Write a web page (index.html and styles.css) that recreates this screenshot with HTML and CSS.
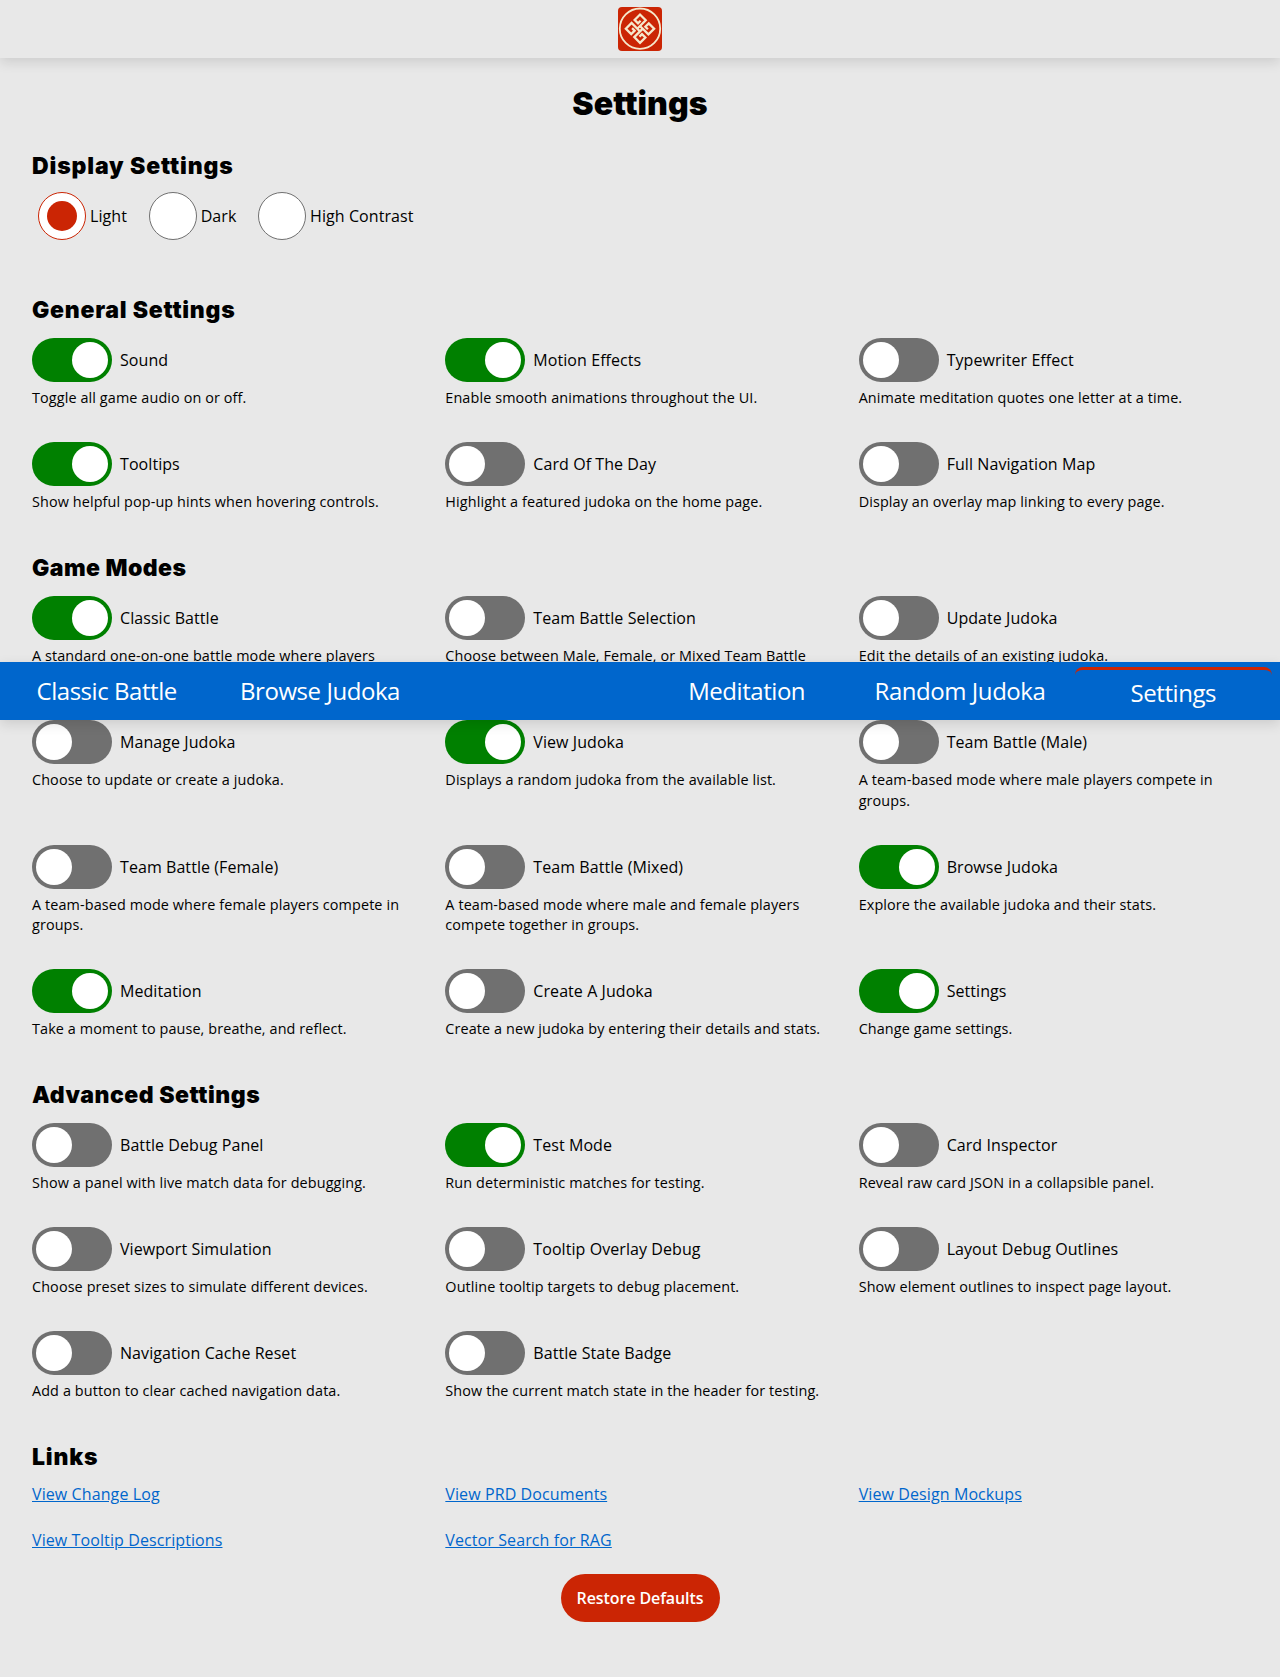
FILE: index.html
```html
<!DOCTYPE html>
<html lang="en">
<head>
<meta charset="utf-8">
<title>Settings</title>
<link rel="stylesheet" href="styles.css">
</head>
<body>
<header class="header">
  <svg class="logo" viewBox="0 0 44 44" aria-hidden="true">
    <rect width="44" height="44" rx="4" fill="#cb2504"/>
    <g fill="none" stroke="#f5e8cc">
      <circle cx="22" cy="21.7" r="20.2" stroke-width="1.8"/>
      <g transform="translate(22 21.7) rotate(45)" stroke-width="2.3">
        <path d="M-2 -1.9H10V-10H2.4V-5.2H6"/>
        <path d="M1.9 -2V10H10V2.4H5.2V6"/>
        <path d="M2 1.9H-10V10H-2.4V5.2H-6"/>
        <path d="M-1.9 2V-10H-10V-2.4H-5.2V-6"/>
      </g>
    </g>
  </svg>
</header>
<main class="page">
  <h1 class="title">Settings</h1>

  <section class="section">
    <h2 class="heading display">Display Settings</h2>
    <div class="modes">
      <label class="mode"><span class="radio checked"></span>Light</label>
      <label class="mode"><span class="radio"></span>Dark</label>
      <label class="mode"><span class="radio"></span>High Contrast</label>
    </div>
  </section>

  <section class="section">
    <h2 class="heading general">General Settings</h2>
    <div class="grid">
      <div class="item"><div class="row"><span class="switch on"></span>Sound</div><p class="desc">Toggle all game audio on or off.</p></div>
      <div class="item"><div class="row"><span class="switch on"></span>Motion Effects</div><p class="desc">Enable smooth animations throughout the UI.</p></div>
      <div class="item"><div class="row"><span class="switch"></span>Typewriter Effect</div><p class="desc">Animate meditation quotes one letter at a time.</p></div>
      <div class="item"><div class="row"><span class="switch on"></span>Tooltips</div><p class="desc">Show helpful pop-up hints when hovering controls.</p></div>
      <div class="item"><div class="row"><span class="switch"></span>Card Of The Day</div><p class="desc">Highlight a featured judoka on the home page.</p></div>
      <div class="item"><div class="row"><span class="switch"></span>Full Navigation Map</div><p class="desc">Display an overlay map linking to every page.</p></div>
    </div>
  </section>

  <section class="section">
    <h2 class="heading game-modes">Game Modes</h2>
    <div class="grid">
      <div class="item"><div class="row"><span class="switch on"></span>Classic Battle</div><p class="desc two-line">A standard one-on-one battle mode where players</p></div>
      <div class="item"><div class="row"><span class="switch"></span>Team Battle Selection</div><p class="desc two-line">Choose between Male, Female, or Mixed Team Battle</p></div>
      <div class="item"><div class="row"><span class="switch"></span>Update Judoka</div><p class="desc">Edit the details of an existing judoka.</p></div>
      <div class="item"><div class="row"><span class="switch"></span>Manage Judoka</div><p class="desc">Choose to update or create a judoka.</p></div>
      <div class="item"><div class="row"><span class="switch on"></span>View Judoka</div><p class="desc">Displays a random judoka from the available list.</p></div>
      <div class="item"><div class="row"><span class="switch"></span>Team Battle (Male)</div><p class="desc">A team-based mode where male players compete in groups.</p></div>
      <div class="item"><div class="row"><span class="switch"></span>Team Battle (Female)</div><p class="desc">A team-based mode where female players compete in groups.</p></div>
      <div class="item"><div class="row"><span class="switch"></span>Team Battle (Mixed)</div><p class="desc">A team-based mode where male and female players compete together in groups.</p></div>
      <div class="item"><div class="row"><span class="switch on"></span>Browse Judoka</div><p class="desc">Explore the available judoka and their stats.</p></div>
      <div class="item"><div class="row"><span class="switch on"></span>Meditation</div><p class="desc">Take a moment to pause, breathe, and reflect.</p></div>
      <div class="item"><div class="row"><span class="switch"></span>Create A Judoka</div><p class="desc">Create a new judoka by entering their details and stats.</p></div>
      <div class="item"><div class="row"><span class="switch on"></span>Settings</div><p class="desc">Change game settings.</p></div>
    </div>
  </section>

  <section class="section">
    <h2 class="heading advanced">Advanced Settings</h2>
    <div class="grid">
      <div class="item"><div class="row"><span class="switch"></span>Battle Debug Panel</div><p class="desc">Show a panel with live match data for debugging.</p></div>
      <div class="item"><div class="row"><span class="switch on"></span>Test Mode</div><p class="desc">Run deterministic matches for testing.</p></div>
      <div class="item"><div class="row"><span class="switch"></span>Card Inspector</div><p class="desc">Reveal raw card JSON in a collapsible panel.</p></div>
      <div class="item"><div class="row"><span class="switch"></span>Viewport Simulation</div><p class="desc">Choose preset sizes to simulate different devices.</p></div>
      <div class="item"><div class="row"><span class="switch"></span>Tooltip Overlay Debug</div><p class="desc">Outline tooltip targets to debug placement.</p></div>
      <div class="item"><div class="row"><span class="switch"></span>Layout Debug Outlines</div><p class="desc">Show element outlines to inspect page layout.</p></div>
      <div class="item"><div class="row"><span class="switch"></span>Navigation Cache Reset</div><p class="desc">Add a button to clear cached navigation data.</p></div>
      <div class="item"><div class="row"><span class="switch"></span>Battle State Badge</div><p class="desc">Show the current match state in the header for testing.</p></div>
    </div>
  </section>

  <section class="section">
    <h2 class="heading more">Links</h2>
    <div class="grid links">
      <a href="#">View Change Log</a>
      <a href="#">View PRD Documents</a>
      <a href="#">View Design Mockups</a>
      <a href="#">View Tooltip Descriptions</a>
      <a href="#">Vector Search for RAG</a>
    </div>
  </section>
  <button class="restore" type="button">Restore Defaults</button>
</main>
<nav class="navbar">
  <a href="#">Classic Battle</a>
  <a href="#">Browse Judoka</a>
  <span></span>
  <a href="#">Meditation</a>
  <a href="#">Random Judoka</a>
  <a href="#" class="active">Settings</a>
</nav>
</body>
</html>
```

FILE: styles.css
```css
* { box-sizing: border-box; }

body {
  margin: 0;
  min-height: 1677px;
  position: relative;
  background: #e8e8e8;
  color: #000;
  font: 16px/24px "Open Sans", "Noto Sans", sans-serif;
  letter-spacing: 0.07px;
}

.header {
  height: 58px;
  display: flex;
  justify-content: center;
  padding-top: 7px;
  box-shadow: 0 4px 12px rgba(0, 0, 0, 0.12);
}
.logo { width: 44px; height: 44px; }

.page {
  padding: 0 32px;
  display: flex;
  flex-direction: column;
}

.title, .heading {
  margin: 0;
  font-family: Inter, "Open Sans", sans-serif;
  font-weight: 900;
}
.title {
  height: 86px;
  padding-top: 26px;
  font-size: 32px;
  line-height: 40px;
  text-align: center;
  letter-spacing: 0.1px;
}
.heading {
  height: 50px;
  padding-top: 6px;
  font-size: 23px;
  line-height: 33px;
}
.display { height: 48px; letter-spacing: 0.86px; }
.general { letter-spacing: 0.75px; }
.game-modes { letter-spacing: 0.45px; }
.advanced { letter-spacing: 0.52px; }
.more { height: 47px; letter-spacing: 0.8px; }

.modes {
  display: flex;
  height: 96px;
  padding: 0 6px;
  gap: 21.7px;
  align-items: flex-start;
}
.mode {
  display: flex;
  align-items: center;
  gap: 4px;
}
.radio {
  width: 48px;
  height: 48px;
  border: 1px solid #707070;
  border-radius: 50%;
  background: #fff;
  display: grid;
  place-items: center;
}
.checked { border-color: #cb2504; }
.checked::after {
  content: "";
  width: 30px;
  height: 30px;
  border-radius: 50%;
  background: #cb2504;
}

.grid {
  display: grid;
  grid-template-columns: repeat(3, 1fr);
  column-gap: 24px;
}
.item { padding-bottom: 33.65px; }
.row {
  display: flex;
  align-items: center;
  gap: 8px;
  height: 44px;
}
.switch {
  width: 80px;
  height: 44px;
  padding: 4px;
  border-radius: 22px;
  background: #707070;
  display: flex;
}
.switch::after {
  content: "";
  width: 36px;
  height: 36px;
  border-radius: 50%;
  background: #fff;
}
.switch.on { background: #008000; justify-content: flex-end; }
.desc {
  margin: 6px 0 0;
  font-size: 14.4px;
  line-height: 20.36px;
  letter-spacing: 0.11px;
}
.two-line { min-height: 40.72px; }

.links { row-gap: 22px; height: 92px; align-content: start; }
.links a { color: #0066cc; justify-self: start; letter-spacing: 0.1px; }

.restore {
  align-self: center;
  width: 159px;
  height: 48px;
  padding: 0;
  border: 0;
  border-radius: 24px;
  background: #cb2504;
  color: #fff;
  font: 600 16px/24px "Open Sans", sans-serif;
  letter-spacing: -0.1px;
}

.navbar {
  position: absolute;
  top: 662px;
  left: 0;
  right: 0;
  height: 58px;
  display: grid;
  grid-template-columns: repeat(6, 1fr);
  background: #0066cc;
  box-shadow: 0 4px 12px rgba(0, 0, 0, 0.12);
}
.navbar a {
  margin: 5px 8px 0;
  padding-top: 7px;
  color: #fff;
  font-size: 24px;
  line-height: 34px;
  letter-spacing: -0.45px;
  text-align: center;
  text-decoration: none;
  white-space: nowrap;
}
.navbar .active {
  padding-top: 6px;
  border-top: 3px solid #cb2504;
  border-radius: 8px;
}
```
